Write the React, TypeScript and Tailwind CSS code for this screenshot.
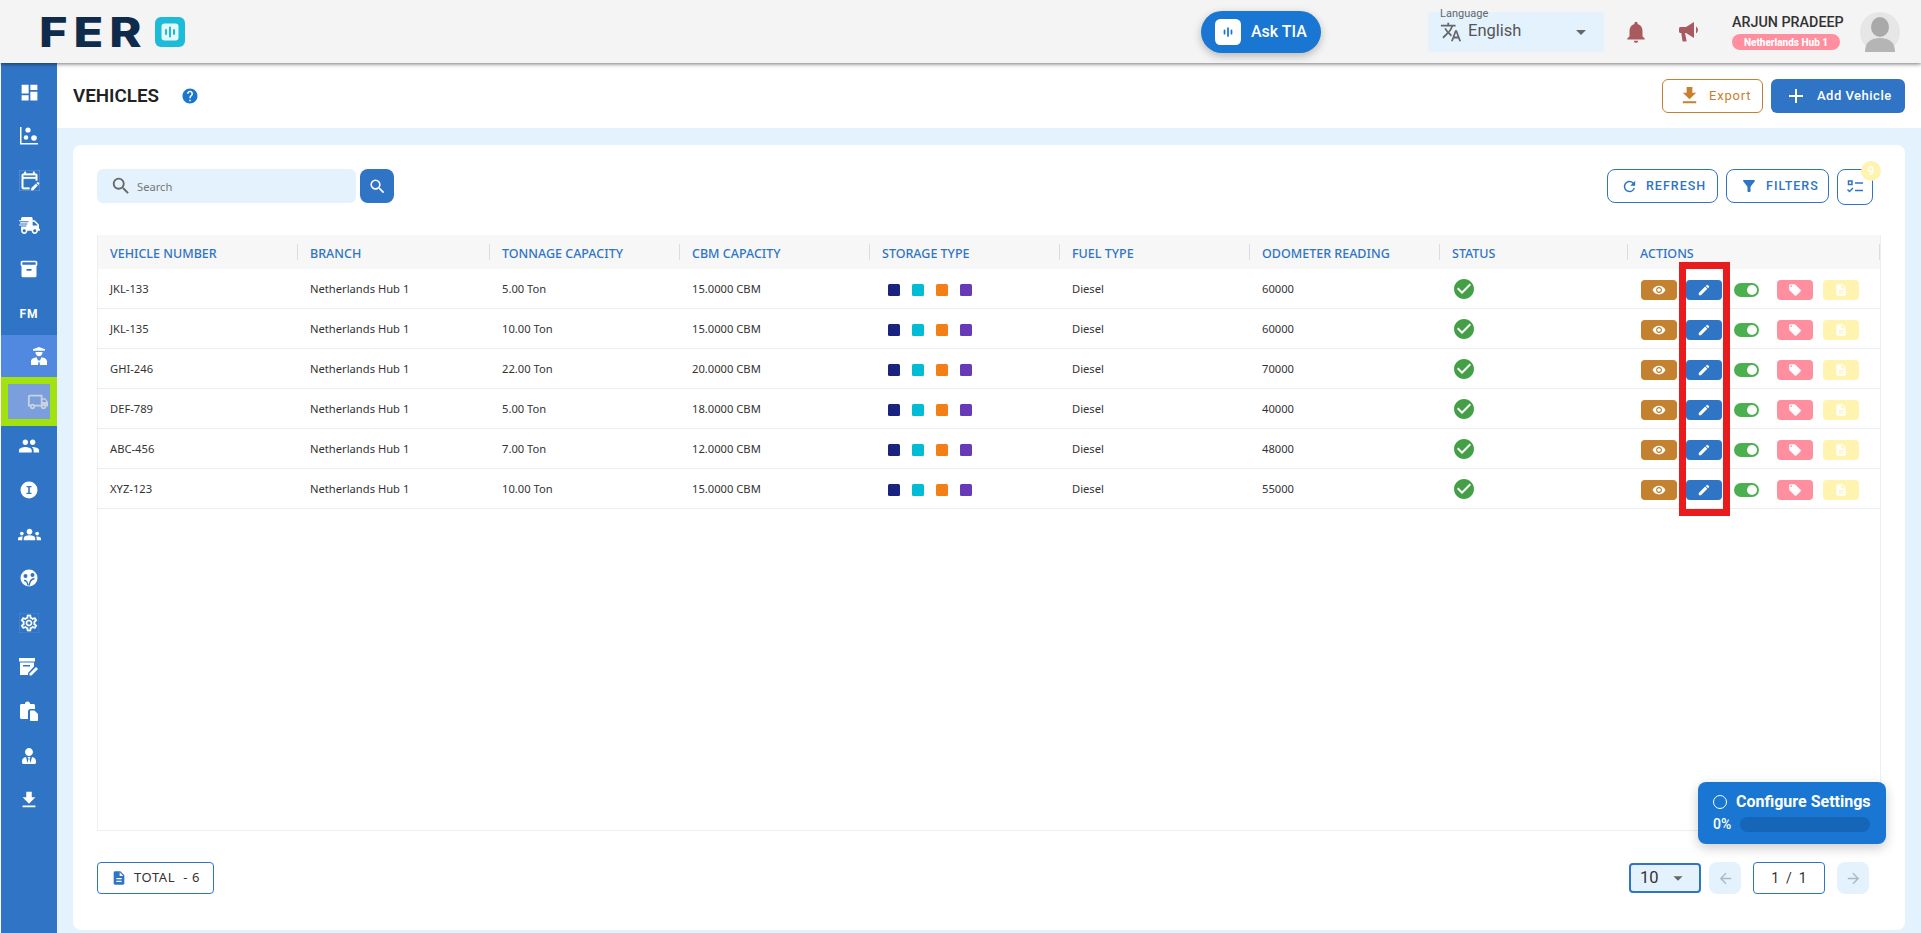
import {
  MdArrowBack,
  MdArrowDropDown,
  MdArrowForward,
  MdCheckCircle,
  MdDashboard,
  MdDescription,
  MdEdit,
  MdFileDownload,
  MdFilterAlt,
  MdGroups,
  MdHelp,
  MdInventory2,
  MdLocalOffer,
  MdNotifications,
  MdOutlineEditCalendar,
  MdOutlineLocalShipping,
  MdOutlineSettings,
  MdPeople,
  MdRefresh,
  MdRemoveRedEye,
  MdSearch,
  MdTranslate,
  MdAdd,
} from "react-icons/md";
import { FaShippingFast, FaUserTie } from "react-icons/fa";

const vehicles = [
  { number: "JKL-133", tonnage: "5.00 Ton", cbm: "15.0000 CBM", odometer: "60000" },
  { number: "JKL-135", tonnage: "10.00 Ton", cbm: "15.0000 CBM", odometer: "60000" },
  { number: "GHI-246", tonnage: "22.00 Ton", cbm: "20.0000 CBM", odometer: "70000" },
  { number: "DEF-789", tonnage: "5.00 Ton", cbm: "18.0000 CBM", odometer: "40000" },
  { number: "ABC-456", tonnage: "7.00 Ton", cbm: "12.0000 CBM", odometer: "48000" },
  { number: "XYZ-123", tonnage: "10.00 Ton", cbm: "15.0000 CBM", odometer: "55000" },
];

const columns = [
  "VEHICLE NUMBER",
  "BRANCH",
  "TONNAGE CAPACITY",
  "CBM CAPACITY",
  "STORAGE TYPE",
  "FUEL TYPE",
  "ODOMETER READING",
  "STATUS",
  "ACTIONS",
];

const gridCols = "grid grid-cols-[200px_192px_190px_190px_190px_190px_190px_188px_1fr]";

function LogoMark({ size, bg, fg, bar }: { size: number; bg: string; fg: string; bar: string }) {
  return (
    <svg width={size} height={size} viewBox="0 0 30 30">
      <rect width="30" height="30" rx="6" fill={bg} />
      <rect x="6.5" y="6.5" width="17" height="17" rx="3" fill={fg} />
      <path d="M11 13v4M15 10.5v9M19 13v4" stroke={bar} strokeWidth="2" strokeLinecap="round" />
    </svg>
  );
}

function ChartDots() {
  return (
    <svg width="20" height="20" viewBox="0 0 20 20" fill="white">
      <path d="M1 1h1.500v16H19v1.500H1z" />
      <circle cx="9" cy="4" r="2.600" />
      <circle cx="7" cy="11.500" r="2.300" />
      <circle cx="15" cy="12" r="2.800" />
    </svg>
  );
}

function DriverIcon() {
  return (
    <svg width="16" height="18" viewBox="0 0 16 18" fill="white">
      <path d="M2 2.200 8 0l6 2.200v1.600H2z" />
      <path d="M4.500 5h7c0 2.400-1.400 4.200-3.500 4.200S4.500 7.400 4.500 5z" />
      <path d="M0 18v-3.500C0 12 3 10.500 5.500 10.300L7 13.500h2l1.500-3.200C13 10.500 16 12 16 14.500V18H9l-.5-3h-1L7 18z" />
    </svg>
  );
}

function InfoBadge() {
  return (
    <svg width="18" height="18" viewBox="0 0 18 18">
      <circle cx="9" cy="9" r="8.500" fill="white" />
      <path d="M6.500 5h5v1.300H9.800v5.400h1.700V13h-5v-1.300h1.700V6.300H6.500z" fill="#2f74c5" />
    </svg>
  );
}

function TeamCircle() {
  return (
    <svg width="18" height="18" viewBox="0 0 18 18">
      <circle cx="9" cy="9" r="8.500" fill="white" />
      <circle cx="5.500" cy="7" r="2" fill="#2f74c5" />
      <circle cx="12.500" cy="6" r="2" fill="#2f74c5" />
      <path d="M4 11.500c2 0 3.500 1 4 5M14.500 9.500c-3 .5-5 3-5.200 7" stroke="#2f74c5" strokeWidth="1.400" fill="none" />
    </svg>
  );
}

function ArchiveEdit() {
  return (
    <svg width="20" height="18" viewBox="0 0 20 18" fill="white">
      <path d="M0 0h16v3.500H0z" />
      <path d="M1 4.500h14v4l-6 6.500v2H1zM4 7v1.500h7V7z" fillRule="evenodd" />
      <path d="M10.500 15.500 17 9l2 2-6.500 6.500h-2z" />
    </svg>
  );
}

function ClipboardFile() {
  return (
    <svg width="18" height="20" viewBox="0 0 18 20" fill="white">
      <path d="M1.500 3H5a2.500 2.500 0 0 1 5 0h3.500c.8 0 1.500.7 1.500 1.500V8h-4.500C9 8 8 9 8 10.500V18H1.500C.7 18 0 17.300 0 16.500v-12C0 3.700.7 3 1.500 3z" />
      <path d="M11 9.500h3.500l3.500 3.500v6c0 .6-.4 1-1 1h-6c-.6 0-1-.4-1-1v-8.500c0-.6.4-1 1-1z" />
    </svg>
  );
}

function Megaphone() {
  return (
    <svg width="21" height="20" viewBox="0 0 21 20" fill="#a85a5e">
      <path d="M0 6.500C0 5.700.7 5 1.500 5H7l8-5v16L7 11H6l1.500 7.500c.1.600-.3 1-.8 1H4.300c-.4 0-.8-.3-.9-.8L2.300 11h-.8C.7 11 0 10.300 0 9.500z" />
      <path d="M17 4.500c2.500 1.500 2.500 5.500 0 7z" />
    </svg>
  );
}

function Avatar() {
  return (
    <svg width="40" height="40" viewBox="0 0 40 40">
      <circle cx="20" cy="20" r="20" fill="#e6e6e6" />
      <ellipse cx="20" cy="15" rx="9" ry="10" fill="#a9a9a9" />
      <path d="M5 40c0-9 5-14 15-14s15 5 15 14z" fill="#b5b5b5" />
    </svg>
  );
}

function ColumnsIcon() {
  return (
    <svg width="16" height="14" viewBox="0 0 16 14" fill="none" stroke="#2f74c5" strokeWidth="1.500">
      <rect x="1.500" y="1" width="3.500" height="3.500" />
      <path d="M8 3h8M.5 9.500l2 2 3.500-3.500M8 10.500h8" />
    </svg>
  );
}

const navTop = [
  <MdDashboard size={21} color="white" />,
  <ChartDots />,
  <MdOutlineEditCalendar size={21} color="white" stroke="white" strokeWidth={0.3} />,
  <FaShippingFast size={21} color="white" />,
  <MdInventory2 size={20} color="white" />,
  <span className="font-['Roboto',sans-serif] text-[12px] font-bold tracking-[1px] text-white">FM</span>,
];

const navBottom = [
  <MdPeople size={22} color="white" />,
  <InfoBadge />,
  <MdGroups size={23} color="white" />,
  <TeamCircle />,
  <MdOutlineSettings size={20} color="white" stroke="white" strokeWidth={0.2} />,
  <ArchiveEdit />,
  <ClipboardFile />,
  <FaUserTie size={16} color="white" />,
  <MdFileDownload size={22} color="white" />,
];

function TopBar() {
  return (
    <header className="relative z-20 flex h-[63px] items-center bg-[#f4f4f4] pl-[39px] pr-[21px] shadow-[0_1px_4px_rgba(0,0,0,0.55)]">
      <div className="flex items-center">
        <span className="w-[114px] origin-left scale-x-[1.19] font-['Inter',sans-serif] text-[41px] leading-[30px] font-extrabold tracking-[5px] text-[#0f2b4c]">
          FER
        </span>
        <span className="ml-[2px]">
          <LogoMark size={30} bg="#1cbcd8" fg="#e4f7fa" bar="#1cbcd8" />
        </span>
      </div>

      <div className="ml-auto flex h-[42px] w-[120px] items-center rounded-full bg-[#1976d2] pl-[14px] shadow-[0_3px_8px_rgba(0,0,0,0.25)]">
        <LogoMark size={26} bg="white" fg="white" bar="#1976d2" />
        <span className="ml-[10px] font-['Roboto',sans-serif] text-[16px] font-medium text-white">Ask TIA</span>
      </div>

      <div className="relative ml-[107px] flex h-[40px] w-[176px] items-center rounded bg-[#e3f2fd] pl-[12px] pr-[16px]">
        <span className="absolute left-[12px] top-[-5px] font-['Roboto',sans-serif] text-[11px] leading-[14px] text-[#666]">Language</span>
        <MdTranslate size={22} color="#666" />
        <span className="ml-[6px] font-['Roboto',sans-serif] text-[16.500px] text-[#555]">English</span>
        <MdArrowDropDown size={24} color="#666" className="ml-auto -mr-[5px]" />
      </div>

      <MdNotifications size={26} color="#a85a5e" className="ml-[19px]" />
      <span className="ml-[30px]">
        <Megaphone />
      </span>

      <div className="ml-[32px] flex w-[128px] flex-col pt-[1px]">
        <span className="font-['Roboto',sans-serif] text-[14.300px] leading-[16px] font-medium text-[#333]">ARJUN PRADEEP</span>
        <span className="mt-[4px] flex h-[16px] w-[108px] items-center justify-center rounded-full bg-[#ff8f9f] font-['Roboto',sans-serif] text-[10px] font-extrabold text-white">
          Netherlands Hub 1
        </span>
      </div>

      <Avatar />
    </header>
  );
}

function Sidebar() {
  return (
    <aside className="relative ml-px flex w-[56px] shrink-0 flex-col bg-[#2f74c5] pt-[7px]">
      {navTop.map((icon, i) => (
        <div key={i} className="flex h-[44.300px] items-center justify-center">
          {icon}
        </div>
      ))}
      <div className="-mt-[1px] flex h-[43px] items-center justify-end bg-[#5189e0] pr-[10px]">
        <DriverIcon />
      </div>
      <div className="mb-[1px] flex h-[44.600px] items-center justify-center" />
      {navBottom.map((icon, i) => (
        <div key={i} className="flex h-[44.300px] items-center justify-center">
          {icon}
        </div>
      ))}
      {/* highlighted menu entry marked up in the screenshot */}
      <div className="absolute left-0 top-[314px] flex h-[49px] w-[56px] items-center justify-end border-[7px] border-[#a2e20f] bg-[#7a9fdc] pr-px">
        <MdOutlineLocalShipping size={22} color="#c9d3df" />
      </div>
    </aside>
  );
}

function PageHead() {
  return (
    <div className="flex h-[65px] shrink-0 items-center bg-white pl-[16px] pr-[16px]">
      <h1 className="pt-[1px] font-['Roboto',sans-serif] text-[18.800px] font-semibold text-[#222]">VEHICLES</h1>
      <MdHelp size={18} color="#1976d2" className="ml-[22px]" />
      <button className="ml-auto flex h-[34px] w-[101px] items-center rounded-md border border-[#c87f2f] pl-[15px] font-['Roboto',sans-serif] text-[13px] tracking-[0.8px] text-[#c87f2f]">
        <MdFileDownload size={23} />
        <span className="ml-[8px]">Export</span>
      </button>
      <button className="ml-[8px] flex h-[34px] w-[134px] items-center rounded-md bg-[#2f74c5] pl-[13px] font-['Roboto',sans-serif] text-[13px] font-medium tracking-[0.5px] text-white">
        <MdAdd size={24} />
        <span className="ml-[9px]">Add Vehicle</span>
      </button>
    </div>
  );
}

function Toolbar() {
  return (
    <div className="flex h-[36px] items-start pr-[8px]">
      <div className="flex h-[34px] w-[259px] items-center rounded-md bg-[#e3f2fd] pl-[13px] font-['Noto_Sans',sans-serif] text-[11.200px] text-[#777]">
        <MdSearch size={22} color="#666" />
        <span className="ml-[5px] pt-[3px]">Search</span>
      </div>
      <button className="ml-[4px] flex h-[34px] w-[34px] items-center justify-center rounded-lg bg-[#2f74c5]">
        <MdSearch size={19} color="white" />
      </button>
      <button className="ml-auto flex h-[34px] w-[111px] items-center rounded-lg border border-[#2f74c5] pl-[13px] font-['Roboto',sans-serif] text-[12.500px] font-medium tracking-[1px] text-[#2f74c5]">
        <MdRefresh size={17} />
        <span className="ml-[8px]">REFRESH</span>
      </button>
      <button className="ml-[8px] flex h-[34px] w-[103px] items-center rounded-lg border border-[#2f74c5] pl-[13px] font-['Roboto',sans-serif] text-[12.500px] font-medium tracking-[1px] text-[#2f74c5]">
        <MdFilterAlt size={18} />
        <span className="ml-[8px]">FILTERS</span>
      </button>
      <button className="relative ml-[8px] flex h-[36px] w-[36px] items-center justify-center rounded-lg border border-[#2f74c5]">
        <ColumnsIcon />
        <span className="absolute right-[-9px] top-[-9px] flex h-[20px] w-[20px] items-center justify-center rounded-full bg-[#fff3b0] font-['Roboto',sans-serif] text-[12px] font-medium text-white">
          9
        </span>
      </button>
    </div>
  );
}

function VehicleRow({ v }: { v: (typeof vehicles)[number] }) {
  return (
    <div className={`${gridCols} h-[40px] items-center border-b border-[#eee] pl-[12px] pt-[1px] font-['Noto_Sans',sans-serif] text-[11.200px] text-[#333]`}>
      <span>{v.number}</span>
      <span>Netherlands Hub 1</span>
      <span>{v.tonnage}</span>
      <span>{v.cbm}</span>
      <span className="flex gap-[12px] pl-[6px] pt-[1px]">
        <i className="h-[12px] w-[12px] rounded-[1.500px] bg-[#1a237e]" />
        <i className="h-[12px] w-[12px] rounded-[1.500px] bg-[#00bcd4]" />
        <i className="h-[12px] w-[12px] rounded-[1.500px] bg-[#f57f17]" />
        <i className="h-[12px] w-[12px] rounded-[1.500px] bg-[#673ab7]" />
      </span>
      <span>Diesel</span>
      <span>{v.odometer}</span>
      <span className="flex">
        <MdCheckCircle size={24} color="#43a047" />
      </span>
      <span className="flex items-center pl-[1px] pt-[1px]">
        <button className="flex h-[20px] w-[36px] items-center justify-center rounded bg-[#c4812f] text-white">
          <MdRemoveRedEye size={14} />
        </button>
        <button className="ml-[9px] flex h-[20px] w-[36px] items-center justify-center rounded bg-[#2f74c5] text-white">
          <MdEdit size={14} />
        </button>
        <span className="ml-[12px] flex h-[14px] w-[25px] items-center justify-end rounded-full bg-[#4caf50] pr-[2px]">
          <i className="h-[10px] w-[10px] rounded-full bg-white" />
        </span>
        <button className="ml-[18px] flex h-[20px] w-[36px] items-center justify-center rounded bg-[#ff8f9f] text-white">
          <MdLocalOffer size={14} />
        </button>
        <button className="ml-[10px] flex h-[20px] w-[36px] items-center justify-center rounded bg-[#fff3b0] text-white">
          <MdDescription size={14} />
        </button>
      </span>
    </div>
  );
}

function VehicleTable() {
  return (
    <div className="mt-[30px] h-[596px] border-x border-b border-[#eee]">
      <div className={`${gridCols} h-[34px] items-center bg-[#f7f7f7] font-['Noto_Sans',sans-serif] text-[12.500px] font-medium text-[#2f74c5]`}>
        {columns.map((c) => (
          <span key={c} className="flex h-[16px] items-center border-r border-[#ddd] pl-[12px] pt-[5px]">
            {c}
          </span>
        ))}
      </div>
      {vehicles.map((v) => (
        <VehicleRow key={v.number} v={v} />
      ))}
    </div>
  );
}

function Pagination() {
  return (
    <div className="mt-[31px] flex items-start">
      <div className="flex h-[32px] w-[117px] items-center rounded border border-[#2f74c5] pl-[13px] font-['Noto_Sans',sans-serif] text-[13px] tracking-[0.6px] text-[#333]">
        <MdDescription size={16} color="#2f74c5" />
        <span className="ml-[7px] whitespace-pre">TOTAL  - 6</span>
      </div>
      <div className="ml-auto mr-[8px] mt-px flex h-[30px] w-[72px] items-center rounded border-2 border-[#2f74c5] bg-[#e3f2fd] pl-[9px] font-['Roboto',sans-serif] text-[16.500px] text-[#333]">
        10
        <MdArrowDropDown size={22} color="#666" className="ml-[8px]" />
      </div>
      <button className="flex h-[32px] w-[32px] items-center justify-center rounded-lg bg-[#e3f2fd] text-[#b0b8bf]">
        <MdArrowBack size={17} />
      </button>
      <div className="ml-[12px] flex h-[32px] w-[72px] items-center justify-center rounded border border-[#2f74c5] font-['Roboto',sans-serif] text-[14px] whitespace-pre text-[#333]">
        1  /  1
      </div>
      <button className="ml-[12px] mr-[12px] flex h-[32px] w-[32px] items-center justify-center rounded-lg bg-[#e3f2fd] text-[#b0b8bf]">
        <MdArrowForward size={17} />
      </button>
    </div>
  );
}

export default function App() {
  return (
    <div className="relative flex h-[933px] flex-col overflow-hidden bg-white">
      <TopBar />
      <div className="flex min-h-0 flex-1">
        <Sidebar />
        <main className="flex min-w-0 flex-1 flex-col bg-[#e3f2fd]">
          <PageHead />
          <section className="mx-[16px] mt-[17px] h-[785px] rounded-lg bg-white px-[24px] pt-[24px]">
            <Toolbar />
            <VehicleTable />
            <Pagination />
          </section>
        </main>
      </div>

      {/* red marker drawn over the edit column in the screenshot */}
      <div className="absolute left-[1679px] top-[262px] h-[254px] w-[51px] border-[7px] border-[#e81c1c]" />

      <div className="absolute left-[1698px] top-[782px] h-[62px] w-[188px] rounded-lg bg-[#1976d2] px-[15px] pt-[12px] font-['Roboto',sans-serif] text-white shadow-[0_4px_12px_rgba(0,0,0,0.2)]">
        <div className="flex items-center">
          <i className="h-[14px] w-[14px] rounded-full border-[1.500px] border-white" />
          <span className="ml-[9px] text-[16px] leading-[16px] font-bold whitespace-nowrap">Configure Settings</span>
        </div>
        <div className="mt-[7px] flex items-center">
          <span className="text-[14px] leading-[15px] font-medium">0%</span>
          <i className="ml-[9px] h-[15px] w-[130px] rounded-full bg-[#1565b8]" />
        </div>
      </div>
    </div>
  );
}
